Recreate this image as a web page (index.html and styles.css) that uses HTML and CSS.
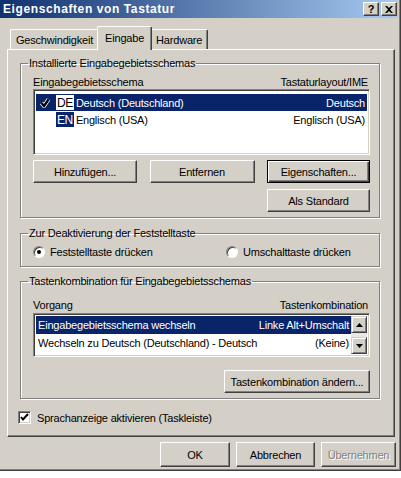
FILE: index.html
```html
<!DOCTYPE html>
<html lang="de">
<head>
    <meta charset="UTF-8">
    <title>Eigenschaften von Tastatur</title>
    <link rel="stylesheet" href="styles.css">
</head>
<body>

<div class="window">
    <!-- Titelleiste -->
    <div class="titlebar">
        <span class="title">Eigenschaften von Tastatur</span>
        <div class="caption-btns">
            <span class="cbtn">?</span>
            <span class="cbtn">
                <svg width="8" height="7" viewBox="0 0 8 7"><path d="M0 0h2l2 2 2-2h2L5 3.5 8 7H6L4 5 2 7H0l3-3.5z" fill="#000"/></svg>
            </span>
        </div>
    </div>

    <div class="dialog">
        <!-- Registerkarten -->
        <div class="tabs">
            <div class="tab">Geschwindigkeit</div>
            <div class="tab active">Eingabe</div>
            <div class="tab">Hardware</div>
        </div>

        <div class="panel">
            <fieldset class="group group-installed">
                <legend>Installierte Eingabegebietsschemas</legend>
                <div class="list-head">
                    <span>Eingabegebietsschema</span>
                    <span>Tastaturlayout/IME</span>
                </div>
                <div class="listbox lang-list">
                    <div class="row selected">
                        <span class="check">
                            <svg width="10" height="10" viewBox="0 0 10 10"><path d="M1.5 5l2.5 3L8.5 1.5" fill="none" stroke="#fff" stroke-width="4"/><path d="M1.5 5l2.5 3L8.5 1.5" fill="none" stroke="#000" stroke-width="2.4"/></svg>
                        </span>
                        <span class="badge">DE</span>
                        <span class="name">Deutsch (Deutschland)</span>
                        <span class="value">Deutsch</span>
                    </div>
                    <div class="row">
                        <span class="check"></span>
                        <span class="badge">EN</span>
                        <span class="name">Englisch (USA)</span>
                        <span class="value">Englisch (USA)</span>
                    </div>
                </div>
                <div class="btn-grid">
                    <button class="btn">Hinzufügen...</button>
                    <button class="btn">Entfernen</button>
                    <button class="btn default">Eigenschaften...</button>
                    <button class="btn col3">Als Standard</button>
                </div>
            </fieldset>

            <fieldset class="group group-caps">
                <legend>Zur Deaktivierung der Feststelltaste</legend>
                <div class="radio-row">
                    <label class="radio"><span class="dot checked"></span>Feststelltaste drücken</label>
                    <label class="radio right"><span class="dot"></span>Umschalttaste drücken</label>
                </div>
            </fieldset>

            <fieldset class="group group-keys">
                <legend>Tastenkombination für Eingabegebietsschemas</legend>
                <div class="list-head">
                    <span>Vorgang</span>
                    <span>Tastenkombination</span>
                </div>
                <div class="listbox key-list">
                    <div class="rows">
                        <div class="row selected">
                            <span class="name">Eingabegebietsschema wechseln</span>
                            <span class="value">Linke Alt+Umschalt</span>
                        </div>
                        <div class="row">
                            <span class="name">Wechseln zu Deutsch (Deutschland) - Deutsch</span>
                            <span class="value">(Keine)</span>
                        </div>
                    </div>
                    <div class="scrollbar">
                        <span class="sbtn">
                            <svg width="7" height="4" viewBox="0 0 7 4"><path d="M3.5 0L7 4H0z" fill="#000"/></svg>
                        </span>
                        <span class="sbtn">
                            <svg width="7" height="4" viewBox="0 0 7 4"><path d="M0 0h7L3.5 4z" fill="#000"/></svg>
                        </span>
                    </div>
                </div>
                <div class="btn-right">
                    <button class="btn wide">Tastenkombination ändern...</button>
                </div>
            </fieldset>

            <label class="checkbox">
                <span class="box">
                    <svg width="9" height="9" viewBox="0 0 9 9"><path d="M1 4l2 2.5L8 1" fill="none" stroke="#000" stroke-width="2"/></svg>
                </span>
                Sprachanzeige aktivieren (Taskleiste)
            </label>
        </div>

        <!-- Dialogschaltflächen -->
        <div class="footer">
            <button class="btn ok">OK</button>
            <button class="btn cancel">Abbrechen</button>
            <button class="btn apply" disabled>Übernehmen</button>
        </div>
    </div>
</div>
<div class="desk"></div>

</body>
</html>
```

FILE: styles.css
```css
body {
    margin: 0;
    width: 401px;
    height: 478px;
    overflow: hidden;
    background-color: #fff;
    font-family: "Liberation Sans", Arial, sans-serif;
    font-size: 11px;
    letter-spacing: -0.2px;
    color: #000;
}
.window {
    height: 471px;
    box-sizing: border-box;
    background-color: #d4d0c8;
    border-right: 1px solid #404040;
    border-bottom: 1px solid #404040;
    box-shadow: inset -1px -1px #808080;
    padding-right: 2px;
    padding-bottom: 2px;
}
.titlebar {
    height: 18px;
    display: flex;
    align-items: center;
    justify-content: space-between;
    background: linear-gradient(90deg, #10306f, #a6caf0);
    padding: 0 1px 0 3px;
}
.title {
    color: #fff;
    font-weight: bold;
    font-size: 12px;
    letter-spacing: 0.6px;
}
.caption-btns {
    display: flex;
    gap: 2px;
}
.cbtn {
    width: 16px;
    height: 14px;
    box-sizing: border-box;
    display: flex;
    align-items: center;
    justify-content: center;
    background-color: #d4d0c8;
    border: 1px solid;
    border-color: #fff #404040 #404040 #fff;
    box-shadow: inset -1px -1px #808080;
    font-weight: bold;
    font-size: 11px;
}
.dialog {
    padding: 8px 0 0 7px;
}
.tabs {
    display: flex;
    height: 23px;
    align-items: flex-end;
    padding-left: 3px;
}
.tab {
    height: 20px;
    box-sizing: border-box;
    padding: 4px 5px 0;
    border: 1px solid;
    border-bottom: none;
    border-color: #fff #404040 #fff #fff;
    border-radius: 2px 2px 0 0;
    box-shadow: inset -1px 0 #808080;
}
.tab.active {
    height: 24px;
    padding: 5px 7px 0;
    margin: 0 -2px -1px;
    position: relative;
    z-index: 1;
    background-color: #d4d0c8;
}
.panel {
    width: 388px;
    height: 388px;
    box-sizing: border-box;
    border: 1px solid;
    border-color: #fff #404040 #404040 #fff;
    box-shadow: inset -1px -1px #808080;
    padding: 7px 14px 0 12px;
}
.group {
    margin: 0;
    padding: 0 9px 0 12px;
    border: 1px solid #808080;
    box-shadow: inset 1px 1px #fff, 1px 1px #fff;
    box-sizing: border-box;
}
.group legend {
    padding: 0 1px;
    margin-left: -5px;
    line-height: 13px;
}
.group-installed {
    height: 161px;
}
.list-head {
    display: flex;
    justify-content: space-between;
    padding: 6px 2px 0 0;
    height: 13px;
    line-height: 13px;
}
.listbox {
    background-color: #fff;
    border: 1px solid;
    border-color: #808080 #fff #fff #808080;
    box-shadow: inset 1px 1px #404040, inset -1px -1px #d4d0c8;
    box-sizing: border-box;
}
.lang-list {
    height: 66px;
    padding: 4px 2px;
}
.row {
    display: flex;
    align-items: center;
    height: 17px;
    padding-right: 2px;
}
.row.selected {
    background-color: #0a246a;
    color: #fff;
}
.row .name {
    flex: 1;
    white-space: nowrap;
    overflow: hidden;
}
.row .value {
    white-space: nowrap;
}
.check {
    width: 11px;
    margin-left: 4px;
    display: flex;
}
.badge {
    background-color: #0a246a;
    color: #fff;
    padding: 1px 1px 0;
    margin: 0 2px 0 5px;
    line-height: 14px;
    font-size: 12px;
    letter-spacing: -0.4px;
}
.row.selected .badge {
    background-color: #fff;
    color: #000;
}
.btn-grid {
    display: grid;
    grid-template-columns: 104px 105px 103px;
    justify-content: space-between;
    row-gap: 6px;
    margin-top: 5px;
}
.btn {
    height: 23px;
    box-sizing: border-box;
    background-color: #d4d0c8;
    border: 1px solid;
    border-color: #fff #404040 #404040 #fff;
    box-shadow: inset -1px -1px #808080, inset 1px 1px #d4d0c8;
    font-family: inherit;
    font-size: 11px;
    letter-spacing: -0.2px;
    color: #000;
    padding: 0 2px;
    white-space: nowrap;
}
.btn.default {
    border: 1px solid #000;
    box-shadow: inset 1px 1px #fff, inset -1px -1px #404040, inset -2px -2px #808080;
}
.btn.col3 {
    grid-column: 3;
}
.btn:disabled {
    color: #808080;
    text-shadow: 1px 1px #fff;
}
.group-caps {
    height: 40px;
    margin-top: 9px;
}
.radio-row {
    display: flex;
    padding-top: 6px;
}
.radio {
    display: flex;
    align-items: center;
    gap: 5px;
    width: 193px;
}
.radio.right {
    width: auto;
}
.dot {
    width: 12px;
    height: 12px;
    box-sizing: border-box;
    border-radius: 50%;
    background-color: #fff;
    border: 1px solid;
    border-color: #808080 #fff #fff #808080;
    box-shadow: inset 1px 1px #404040;
    position: relative;
}
.dot.checked::after {
    content: "";
    position: absolute;
    left: 3px;
    top: 3px;
    width: 4px;
    height: 4px;
    border-radius: 50%;
    background-color: #000;
}
.group-keys {
    height: 124px;
    margin-top: 8px;
}
.group-keys .list-head {
    padding-top: 11px;
}
.key-list {
    height: 44px;
    margin-top: 1px;
    display: flex;
    padding: 2px;
}
.key-list .rows {
    flex: 1;
    overflow: hidden;
}
.key-list .row {
    height: 18px;
    padding-left: 2px;
}
.scrollbar {
    width: 16px;
    display: flex;
    flex-direction: column;
    justify-content: space-between;
    background-color: #e9e7e3;
}
.sbtn {
    height: 17px;
    box-sizing: border-box;
    display: flex;
    align-items: center;
    justify-content: center;
    background-color: #d4d0c8;
    border: 1px solid;
    border-color: #d4d0c8 #404040 #404040 #d4d0c8;
    box-shadow: inset 1px 1px #fff, inset -1px -1px #808080;
}
.btn-right {
    display: flex;
    justify-content: flex-end;
    margin-top: 13px;
}
.btn.wide {
    width: 146px;
}
.checkbox {
    display: flex;
    align-items: center;
    gap: 6px;
    margin: 12px 0 0 -2px;
}
.box {
    width: 13px;
    height: 13px;
    box-sizing: border-box;
    display: flex;
    align-items: center;
    justify-content: center;
    background-color: #fff;
    border: 1px solid;
    border-color: #808080 #fff #fff #808080;
    box-shadow: inset 1px 1px #404040, inset -1px -1px #d4d0c8;
}
.footer {
    display: flex;
    justify-content: flex-end;
    gap: 6px;
    padding: 5px 0 0;
    margin-right: 2px;
}
.footer .btn {
    height: 25px;
}
.btn.ok {
    width: 70px;
}
.btn.cancel {
    width: 79px;
}
.btn.apply {
    width: 75px;
}
.desk {
    height: 7px;
    background-color: #fff;
}
```
